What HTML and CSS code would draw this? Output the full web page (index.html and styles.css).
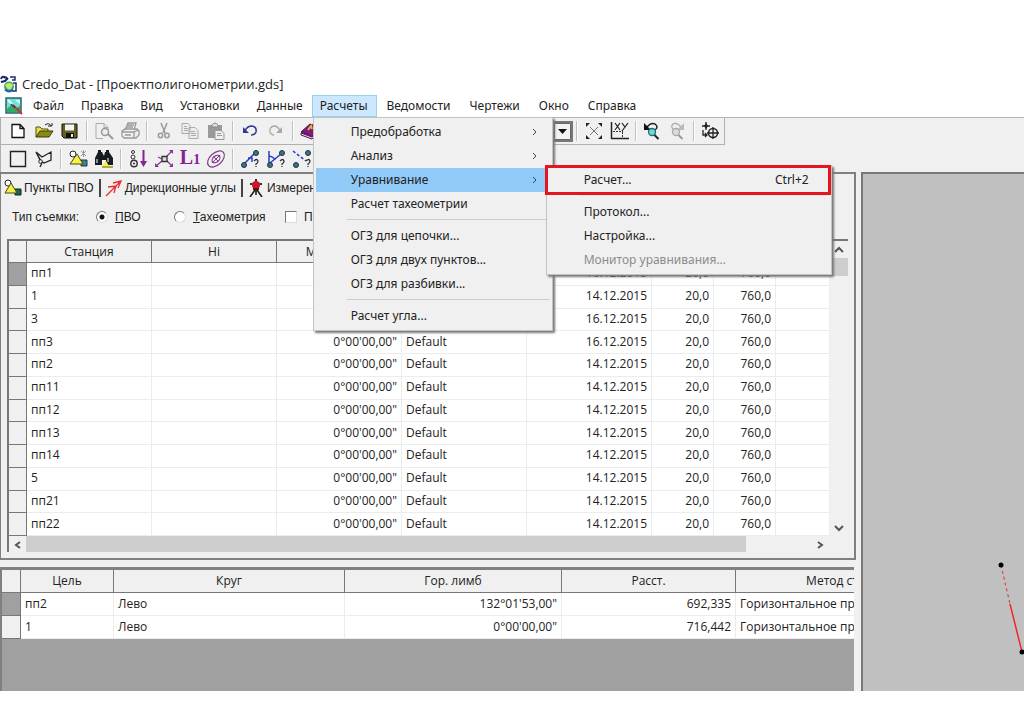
FILE: index.html
```html
<!DOCTYPE html>
<html lang="ru">
<head>
<meta charset="utf-8">
<title>Credo_Dat</title>
<link rel="stylesheet" href="styles.css">
</head>
<body>
<div class="window">
  <header class="titlebar">
    <svg class="app-icon" width="18" height="18" viewBox="0 0 18 18"><path d="M1 4q1-3 3-2t3 0M1 7l4-1 3-3" fill="none" stroke="#17206e" stroke-width="2"/><path d="M10 2h5v3h-3M13 8h3v8h-4" fill="none" stroke="#222a70" stroke-width="1.500"/><circle cx="9" cy="11.500" r="5" fill="#35ad6a"/><path d="M5 10q4-4 8 0l-2 4q-3 2-6-4" fill="#c9e86b"/><path d="M5 14.500q4 4 8 0" stroke="#1d62b8" stroke-width="2" fill="none"/></svg>
    <h1 class="title">Credo_Dat - [Проектполигонометрии.gds]</h1>
  </header>

  <nav class="menubar">
    <svg class="doc-icon" width="18" height="18" viewBox="0 0 18 18"><rect x="1" y="1" width="15" height="15" fill="#6fe0dd" stroke="#2d6468" stroke-width="1.500"/><path d="M2 12l4-4 4 4 5-3v6H2z" fill="#31a968"/><path d="M10 3l5 4V3z" fill="#d6fbfa"/><path d="M3 3l5 5" stroke="#e8fff6" stroke-width="2"/><path d="M8 8l9 9" stroke="#c8303a" stroke-width="1.800"/><path d="M6 7l4 4" stroke="#333" stroke-width="1.500"/></svg>
    <button class="menu-button">Файл</button>
    <button class="menu-button">Правка</button>
    <button class="menu-button">Вид</button>
    <button class="menu-button">Установки</button>
    <button class="menu-button">Данные</button>
    <div class="menu-holder">
      <button class="menu-button menu-button-open">Расчеты</button>
      <div class="menu main-menu">
        <button class="menu-item">Предобработка<svg class="chevron" width="6" height="8" viewBox="0 0 6 8"><path d="M1 1l3 3-3 3"/></svg></button>
        <button class="menu-item">Анализ<svg class="chevron" width="6" height="8" viewBox="0 0 6 8"><path d="M1 1l3 3-3 3"/></svg></button>
        <button class="menu-item menu-item-active">Уравнивание<svg class="chevron" width="6" height="8" viewBox="0 0 6 8"><path d="M1 1l3 3-3 3"/></svg></button>
        <button class="menu-item">Расчет тахеометрии</button>
        <hr class="menu-line">
        <button class="menu-item">ОГЗ для цепочки...</button>
        <button class="menu-item">ОГЗ для двух пунктов...</button>
        <button class="menu-item">ОГЗ для разбивки...</button>
        <hr class="menu-line">
        <button class="menu-item">Расчет угла...</button>
      </div>
      <div class="menu sub-menu">
        <button class="menu-item">Расчет...<span class="shortcut">Ctrl+2</span></button>
        <hr class="menu-line menu-line-faint">
        <button class="menu-item">Протокол...</button>
        <button class="menu-item">Настройка...</button>
        <button class="menu-item" disabled>Монитор уравнивания...</button>
        <div class="highlight-frame"></div>
      </div>
    </div>
    <button class="menu-button">Ведомости</button>
    <button class="menu-button">Чертежи</button>
    <button class="menu-button">Окно</button>
    <button class="menu-button">Справка</button>
  </nav>

  <div class="toolbar toolbar-main">
    <button class="tool" aria-label="Создать"><svg viewBox="0 0 20 20"><path d="M4 3.500h8l4 4v9H4zM12 3.500v4h4" fill="#fff" stroke="#111" stroke-width="1.300"/></svg></button>
    <button class="tool" aria-label="Открыть"><svg viewBox="0 0 20 20"><path d="M2 16V6h4l2 2h6v2" fill="#e3dc4c" stroke="#55530c"/><path d="M2 16l4-6h13l-4 6z" fill="#8b8a16" stroke="#3a390a"/><path d="M11 4q4-3 6 1m-3 0h4V2" fill="none" stroke="#222"/></svg></button>
    <button class="tool" aria-label="Сохранить"><svg viewBox="0 0 20 20"><path d="M2 3h15v14H4l-2-2z" fill="#62621a" stroke="#111"/><path d="M5 3.500h9v6H5z" fill="#f4f4f4"/><path d="M6 12h8v5H6z" fill="#111"/><path d="M11 13h2v3h-2z" fill="#eee"/></svg></button>
    <span class="tool-line"></span>
    <button class="tool" aria-label="Просмотр"><svg viewBox="0 0 20 20"><path d="M9 17.500H2v-15h8l4 4v3M10 2.500v4h4" fill="none" stroke="#aaa"/><circle cx="11" cy="11" r="3.500" fill="#eee" stroke="#999" stroke-width="1.500"/><path d="M14 13l5 5" stroke="#999" stroke-width="2"/></svg></button>
    <button class="tool" aria-label="Печать"><svg viewBox="0 0 20 20"><path d="M5 9l3-7h8l-2 7M2 10l3-2h12l2 2v4l-3 3H4l-2-2zM2 11h12l4-2M14 11v6M8 4h6M7 6h6M5 14h6" fill="none" stroke="#999" stroke-width="1.300"/></svg></button>
    <span class="tool-line"></span>
    <button class="tool" aria-label="Вырезать"><svg viewBox="0 0 20 20"><path d="M7 2l4 10M13 2L9 12" stroke="#999" stroke-width="1.500"/><circle cx="6.500" cy="14.500" r="2.200" fill="none" stroke="#999" stroke-width="1.500"/><circle cx="13" cy="14.500" r="2.200" fill="none" stroke="#999" stroke-width="1.500"/></svg></button>
    <button class="tool" aria-label="Копировать"><svg viewBox="0 0 20 20"><path d="M2 2.500h6l2 2v8H2zM9 6.500h6l3 3v8H9zM4 5.500h3M4 7.500h4M4 9.500h4M11 10.500h4M11 12.500h5M11 14.500h5" fill="#eee" stroke="#aaa"/></svg></button>
    <button class="tool" aria-label="Вставить"><svg viewBox="0 0 20 20"><path d="M2 4h14v13H2z" fill="#999"/><path d="M6 4q3-4 6 0v2H6z" fill="#ddd" stroke="#888"/><path d="M9 9.500h6l3 3v6H9zM11 12.500h4M11 14.500h5" fill="#eee" stroke="#999"/></svg></button>
    <span class="tool-line"></span>
    <button class="tool" aria-label="Отменить"><svg viewBox="0 0 20 20"><path d="M5 10q2-5 7-5 5 1 4 6-1 3-5 3" fill="none" stroke="#303a91" stroke-width="1.500"/><path d="M3 6v6h6z" fill="#303a91"/></svg></button>
    <button class="tool" aria-label="Вернуть"><svg viewBox="0 0 20 20"><path d="M14 10q-2-5-6-5-5 1-4 6 1 3 4 3" fill="none" stroke="#aaa" stroke-width="1.300"/><path d="M16 6v6h-6z" fill="#aaa"/></svg></button>
    <span class="tool-line"></span>
    <button class="tool" aria-label="Справочник"><svg viewBox="0 0 20 20"><path d="M1 11l9-8 9 3-7 10z" fill="#81177f" stroke="#420c46"/><path d="M1 12l11 4 7-10v3l-7 9L1 14z" fill="#eadcf0" stroke="#551357"/><path d="M8 9l3-4 1 3" stroke="#e0b72d" fill="none" stroke-width="2"/></svg></button>
    <div class="scale-box"><select aria-label="Масштаб"><option></option></select><svg class="scale-arrow" width="17" height="17" viewBox="0 0 17 17"><path d="M.5.5h16v16H.5z" fill="#f3f3f3" stroke="#666"/><path d="M4 6h9l-4.500 5z" fill="#111"/></svg></div>
    <span class="tool-line"></span>
    <button class="tool" aria-label="Показать все"><svg viewBox="0 0 20 20"><path d="M6 6l8 8M14 6l-8 8" stroke="#777"/><path d="M2 6V2h4zM14 2h4v4zM18 14v4h-4zM6 18H2v-4z" fill="#222"/></svg></button>
    <button class="tool" aria-label="Координаты"><svg viewBox="0 0 20 20"><path d="M1.500 1v17M1 17.500h18" stroke="#222" stroke-width="1.500"/><path d="M5 2l5 7M10 2L5 9M12 2l3 4 3-4M15 6l-3 4" fill="none" stroke="#222" stroke-width="1.200"/><path d="M3 10.500h10M12.500 11v6" stroke="#333" stroke-dasharray="2 1"/></svg></button>
    <span class="tool-line tool-line-narrow"></span>
    <button class="tool" aria-label="Предыдущий вид"><svg viewBox="0 0 20 20"><path d="M5 6q4-5 8-3 4 3 0 6" fill="none" stroke="#222" stroke-width="1.500"/><path d="M2 2v7h7z" fill="#111"/><circle cx="10" cy="11" r="3.500" fill="#63dddf" stroke="#246b74" stroke-width="1.300"/><path d="M12.500 14l4 4" stroke="#222" stroke-width="2"/></svg></button>
    <button class="tool" aria-label="Следующий вид"><svg viewBox="0 0 20 20"><path d="M13 6Q9 1 5 3 2 6 6 9" fill="none" stroke="#aaa" stroke-width="1.300"/><path d="M16 2v7H9z" fill="#bbb"/><circle cx="8" cy="11" r="3.500" fill="#ddd" stroke="#aaa" stroke-width="1.300"/><path d="M10.500 14l4 4" stroke="#999" stroke-width="2"/></svg></button>
    <span class="tool-line tool-line-narrow"></span>
    <button class="tool tool-end" aria-label="Центрировать"><svg viewBox="0 0 20 20"><circle cx="13" cy="12" r="4.500" fill="none" stroke="#222" stroke-width="1.500"/><path d="M7 12h12M13 6v12M6 1v8M2 5h8M3 9v5h4M5 12l2 2-2 2" fill="none" stroke="#222" stroke-width="1.300"/><path d="M6 2l2 3-2 3-2-3z" fill="#222"/></svg></button>
  </div>

  <div class="toolbar">
    <button class="tool" aria-label="Прямоугольник"><svg viewBox="0 0 20 20"><path d="M2.500 2.500h15v15h-15z" fill="none" stroke="#222" stroke-width="1.400"/></svg></button>
    <button class="tool" aria-label="Контур"><svg viewBox="0 0 20 20"><path d="M2 3l6 5 9-5v8l-7 3-3-2zM2 3l4 8M8 14l-2 4" fill="none" stroke="#222" stroke-width="1.300"/><circle cx="6.500" cy="12.500" r="1.800" fill="#eee" stroke="#222"/></svg></button>
    <span class="tool-line"></span>
    <button class="tool" aria-label="Пункты"><svg viewBox="0 0 20 20"><circle cx="5" cy="5" r="3" fill="#fff" stroke="#222"/><path d="M13 11h6v6h-6z" fill="#3b8190" stroke="#234"/><path d="M2 15L9 5l6 10z" fill="#f6f04b" stroke="#4b4912"/><path d="M13 2l5 5M18 2l-5 5M15.500 1v7" stroke="#999"/></svg></button>
    <button class="tool" aria-label="Найти"><svg viewBox="0 0 20 20"><path d="M1 16V9l3-6h4l2 4 1-4h4l4 6v7h-7v-5H8v5zM4 1h3v3H4zM12 1h3v3h-3z" fill="#181c21"/><path d="M3 10v4M14 9v4" stroke="#fff"/><path d="M8 17l4-5 3 5z" fill="#f6ef50"/><path d="M8 18h11" stroke="#b0aa37" stroke-width="2"/></svg></button>
    <span class="tool-line"></span>
    <button class="tool" aria-label="Высоты"><svg viewBox="0 0 20 20"><circle cx="5" cy="3" r="1.500" fill="none" stroke="#333"/><circle cx="5" cy="8" r="2" fill="none" stroke="#333"/><circle cx="6" cy="14.500" r="3.200" fill="none" stroke="#333" stroke-width="1.400"/><circle cx="6" cy="14.500" r="1" fill="#333"/><path d="M15.500 1v14" stroke="#842391" stroke-width="2"/><path d="M12 12h7l-3.500 6z" fill="#842391"/></svg></button>
    <button class="tool" aria-label="Сеть"><svg viewBox="0 0 20 20"><path d="M2 17l6-5M12 8l6-6M12 11l6 6M8 10L4 8" stroke="#8b3295" stroke-width="1.300"/><path d="M19 1v4l-4-4zM1 18v-4l4 4zM19 18h-4l4-4z" fill="#8b3295"/><path d="M8 7.500h5v5H8z" fill="#ddd" stroke="#333" stroke-width="1.300"/></svg></button>
    <button class="tool" aria-label="L1"><span class="glyph-l">L<small>1</small></span></button>
    <button class="tool" aria-label="Эллипсы"><svg viewBox="0 0 20 20"><g transform="rotate(-42 10 10)" fill="none" stroke="#813c90" stroke-width="1.200"><ellipse cx="10" cy="10" rx="10" ry="6"/><ellipse cx="10" cy="10" rx="4.500" ry="3"/></g><path d="M8 8l4 4M6 14l8-8" stroke="#813c90"/></svg></button>
    <span class="tool-line"></span>
    <button class="tool" aria-label="Обратная задача"><svg viewBox="0 0 20 20"><path d="M5 14l9-9M8 9h4v4" fill="none" stroke="#293aca" stroke-width="1.500"/><circle cx="4" cy="16" r="2.500" fill="#38777c" stroke="#234"/><circle cx="16" cy="4" r="2.500" fill="#38777c" stroke="#234"/><path d="M14 12q3-3 4 0 0 2-2 3v1m0 1v1" fill="none" stroke="#333" stroke-width="1.300"/></svg></button>
    <button class="tool" aria-label="Угол"><svg viewBox="0 0 20 20"><path d="M3 15V2M4 14L15 5M3 7q5 1 6 4" fill="none" stroke="#293aca" stroke-width="1.500"/><circle cx="4" cy="16" r="2.500" fill="#38777c" stroke="#234"/><circle cx="16" cy="4" r="2.500" fill="#38777c" stroke="#234"/><path d="M14 12q3-3 4 0 0 2-2 3v1m0 1v1" fill="none" stroke="#333" stroke-width="1.300"/></svg></button>
    <button class="tool" aria-label="Створ"><svg viewBox="0 0 20 20"><path d="M1 2l13 10" stroke="#293aca" stroke-width="1.500" stroke-dasharray="3 2"/><circle cx="4" cy="16" r="2.500" fill="#38777c" stroke="#234"/><circle cx="16" cy="4" r="2.500" fill="#38777c" stroke="#234"/><path d="M14 12q3-3 4 0 0 2-2 3v1m0 1v1" fill="none" stroke="#333" stroke-width="1.300"/></svg></button>
  </div>

  <main class="workspace">
    <div class="left">
      <section class="stations">
        <div class="tabs">
          <button class="tab"><svg width="18" height="18" viewBox="0 0 18 18"><circle cx="4" cy="4" r="3" fill="#fff" stroke="#222"/><path d="M11 10h6v6h-6z" fill="#176d36" stroke="#123"/><path d="M1 14L7 4l6 10z" fill="#f6ee45" stroke="#4b4912"/></svg>Пункты ПВО</button>
          <button class="tab"><svg width="18" height="18" viewBox="0 0 18 18"><path d="M1 17L16 2M8 4l8-2-3 7M3 8l8-1-2 7" fill="none" stroke="#ed2b2b" stroke-width="1.300"/></svg>Дирекционные углы</button>
          <button class="tab tab-last"><svg width="18" height="18" viewBox="0 0 18 18"><path d="M9 0v3M3 5h12" stroke="#333" stroke-width="2"/><circle cx="9" cy="6" r="4" fill="#c9182a"/><path d="M6 9h6v2H6z" fill="#611"/><path d="M8 11l-5 7M10 11l5 7M9 11v5" stroke="#282020" stroke-width="1.600"/></svg>Измерения</button>
        </div>
        <div class="filters">
          <span class="filter-title">Тип съемки:</span>
          <label class="choice choice-first"><input type="radio" name="survey" checked><span><u>П</u>ВО</span></label>
          <label class="choice choice-second"><input type="radio" name="survey"><span><u>Т</u>ахеометрия</span></label>
          <label class="choice"><input type="checkbox"><span>П</span></label>
        </div>
        <div class="grid-box">
          <div class="grid-main">
            <table class="grid station-grid">
              <colgroup><col class="c-mark"><col class="c-wide"><col class="c-wide"><col class="c-wide"><col class="c-wide"><col class="c-wide"><col class="c-num"><col class="c-num"><col></colgroup>
              <thead><tr><th></th><th>Станция</th><th>Hi</th><th>Место нуля</th><th></th><th></th><th></th><th></th><th></th></tr></thead>
              <tbody>
                <tr class="current"><th></th><td>пп1</td><td></td><td></td><td></td><td class="num">16.12.2015</td><td class="num">20,0</td><td class="num">760,0</td><td></td></tr>
                <tr><th></th><td>1</td><td></td><td></td><td></td><td class="num">14.12.2015</td><td class="num">20,0</td><td class="num">760,0</td><td></td></tr>
                <tr><th></th><td>3</td><td></td><td></td><td></td><td class="num">16.12.2015</td><td class="num">20,0</td><td class="num">760,0</td><td></td></tr>
                <tr><th></th><td>пп3</td><td></td><td class="num">0°00'00,00"</td><td>Default</td><td class="num">16.12.2015</td><td class="num">20,0</td><td class="num">760,0</td><td></td></tr>
                <tr><th></th><td>пп2</td><td></td><td class="num">0°00'00,00"</td><td>Default</td><td class="num">14.12.2015</td><td class="num">20,0</td><td class="num">760,0</td><td></td></tr>
                <tr><th></th><td>пп11</td><td></td><td class="num">0°00'00,00"</td><td>Default</td><td class="num">14.12.2015</td><td class="num">20,0</td><td class="num">760,0</td><td></td></tr>
                <tr><th></th><td>пп12</td><td></td><td class="num">0°00'00,00"</td><td>Default</td><td class="num">14.12.2015</td><td class="num">20,0</td><td class="num">760,0</td><td></td></tr>
                <tr><th></th><td>пп13</td><td></td><td class="num">0°00'00,00"</td><td>Default</td><td class="num">14.12.2015</td><td class="num">20,0</td><td class="num">760,0</td><td></td></tr>
                <tr><th></th><td>пп14</td><td></td><td class="num">0°00'00,00"</td><td>Default</td><td class="num">14.12.2015</td><td class="num">20,0</td><td class="num">760,0</td><td></td></tr>
                <tr><th></th><td>5</td><td></td><td class="num">0°00'00,00"</td><td>Default</td><td class="num">14.12.2015</td><td class="num">20,0</td><td class="num">760,0</td><td></td></tr>
                <tr><th></th><td>пп21</td><td></td><td class="num">0°00'00,00"</td><td>Default</td><td class="num">14.12.2015</td><td class="num">20,0</td><td class="num">760,0</td><td></td></tr>
                <tr><th></th><td>пп22</td><td></td><td class="num">0°00'00,00"</td><td>Default</td><td class="num">14.12.2015</td><td class="num">20,0</td><td class="num">760,0</td><td></td></tr>
              </tbody>
            </table>
            <div class="v-scroll">
              <button class="scroll-button" aria-label="Вверх"><svg width="10" height="8" viewBox="0 0 10 8"><path d="M1 6l4-4 4 4"/></svg></button>
              <div class="v-thumb"></div>
              <button class="scroll-button scroll-down" aria-label="Вниз"><svg width="10" height="8" viewBox="0 0 10 8"><path d="M1 2l4 4 4-4"/></svg></button>
            </div>
          </div>
          <div class="h-scroll">
            <button class="scroll-button" aria-label="Влево"><svg width="8" height="10" viewBox="0 0 8 10"><path d="M6 2L2 5l4 3"/></svg></button>
            <div class="h-thumb"></div>
            <button class="scroll-button scroll-right" aria-label="Вправо"><svg width="8" height="10" viewBox="0 0 8 10"><path d="M2 2l4 3-4 3"/></svg></button>
          </div>
        </div>
      </section>
      <section class="targets">
        <table class="grid target-grid">
          <colgroup><col class="t-mark"><col class="t-goal"><col class="t-circle"><col class="t-limb"><col class="t-dist"><col class="t-method"></colgroup>
          <thead><tr><th></th><th>Цель</th><th>Круг</th><th>Гор. лимб</th><th>Расст.</th><th>Метод съемки</th></tr></thead>
          <tbody>
            <tr class="current"><th></th><td>пп2</td><td>Лево</td><td class="num">132°01'53,00"</td><td class="num">692,335</td><td>Горизонтальное проложение</td></tr>
            <tr><th></th><td>1</td><td>Лево</td><td class="num">0°00'00,00"</td><td class="num">716,442</td><td>Горизонтальное проложение</td></tr>
          </tbody>
        </table>
      </section>
    </div>
    <section class="plan">
      <svg class="plan-drawing" viewBox="0 0 161 517" preserveAspectRatio="xMinYMin meet"><path d="M138 391l9 39" stroke="#dd4444" stroke-width="1.200" stroke-dasharray="3 3"/><path d="M147 430l12 48" stroke="#ee2222" stroke-width="1.400"/><circle cx="138" cy="391" r="2.500"/><circle cx="159" cy="478" r="2.500"/></svg>
    </section>
  </main>
</div>
</body>
</html>
```
FILE: styles.css
```css
* { box-sizing: border-box; }

body {
  margin: 0;
  padding-top: 72px;
  background: #fff;
  color: #222;
  font: 12px/16px "Open Sans", "Noto Sans", sans-serif;
  overflow: hidden;
}

button, input, select { margin: 0; font: inherit; color: inherit; }
button { padding: 0; border: 0; background: none; text-align: left; white-space: nowrap; }

.window {
  display: flex;
  flex-direction: column;
  height: calc(100vh - 102px);
  background: linear-gradient(#fff 46px, #f0f0f0 46px);
}

.titlebar { display: flex; align-items: center; gap: 4px; height: 23px; }
.title { margin: 0; font-size: 13px; font-weight: 400; }

.menubar {
  display: flex;
  flex: none;
  gap: 1px;
  height: 23px;
  padding-left: 5px;
  border-bottom: 1px solid #b4b4b4;
  font-family: "Noto Sans", "Open Sans", sans-serif;
}
.doc-icon { align-self: center; margin-right: 1px; }
.menu-button { height: 22px; padding: 0 8px; }
.menu-holder ~ .menu-button { padding: 0 9px; }
.menu-button-open { background: #cce8ff; border: 1px solid #99cfef; padding: 0 8px 0 7px; }
.menu-holder { position: relative; }

.menu {
  position: absolute;
  padding: 2px;
  background: #f0f0f0;
  border: 1px solid #c4c4c4;
  box-shadow: 2px 2px 2px #777;
}
.main-menu { top: 22px; left: 1px; width: 240px; z-index: 2; }
.sub-menu { top: 70px; left: 234px; width: 286px; z-index: 3; }
.menu-item {
  display: flex;
  align-items: center;
  justify-content: space-between;
  width: 100%;
  height: 24px;
  padding: 0 12px 0 35px;
}
.menu-item:disabled { color: #8c8c8c; }
.menu-item-active { background: #91c9f7; }
.menu-line { margin: 3px 0 4px 31px; border: 0; border-top: 1px solid #ccc; }
.menu-line-faint { border-color: #e4e4e4; }
.chevron { fill: none; stroke: #444; stroke-width: 1; }
.shortcut { padding-right: 8px; }
.highlight-frame {
  position: absolute;
  top: -1px;
  left: -2px;
  right: 0;
  height: 30px;
  border: 3px solid #e6141c;
}

.toolbar {
  display: flex;
  flex: none;
  align-items: center;
  height: 27px;
  padding-left: 4px;
  background: #f0f0f0;
  border-left: 1px solid #b0b0b0;
}
.toolbar-main { width: 725px; border-right: 1px solid #b0b0b0; border-bottom: 1px solid #b0b0b0; }
.tool { display: flex; flex: none; align-items: center; justify-content: center; width: 26px; height: 24px; }
.tool svg { width: 20px; height: 20px; fill: none; }
.tool-end { margin-right: 1px; }
.tool-line { flex: none; width: 2px; height: 20px; margin: 0 3px; background: #c0c0c0; border-right: 1px solid #fff; }
.tool-line-narrow { margin: 0 2px; }
.glyph-l { color: #842391; font: 700 20px/20px "Liberation Serif", serif; }
.glyph-l small { font-size: 14px; }
.scale-box { position: relative; flex: 1; height: 21px; }
.scale-box select { width: 100%; height: 21px; appearance: none; background: #fff; border: 2px solid #777; border-radius: 0; }
.scale-arrow { position: absolute; top: 2px; right: 2px; }

.workspace { display: flex; flex: 1; min-height: 0; }
.left { display: flex; flex-direction: column; width: 856px; flex: none; }
.stations {
  display: flex;
  flex-direction: column;
  height: 388px;
  flex: none;
  padding: 1px 6px 0 0;
  border: 2px solid #808080;
  border-width: 2px 2px 2px 1px;
}
.tabs, .filters { display: flex; align-items: center; font-family: "Liberation Sans", sans-serif; }
.tabs { height: 25px; padding-left: 3px; }
.tab { display: flex; align-items: center; gap: 2px; padding-right: 5px; margin-right: 4px; border-right: 2px solid #444; }
.tab-last { border: 0; }
.filters { height: 34px; padding: 0 0 0 11px; }
.filter-title { width: 84px; }
.choice { display: flex; align-items: center; gap: 7px; }
.choice-first { width: 78px; }
.choice-second { width: 111px; }
.choice input {
  appearance: none;
  width: 12px;
  height: 12px;
  background: #fff;
  border: 1px solid #777;
  border-right-color: #ddd;
  border-bottom-color: #ddd;
}
.choice input[type="radio"] { border-radius: 50%; }
.choice input[type="radio"]:checked { background: radial-gradient(#111 2px, #fff 3px); }

.grid-box { margin: 5px 0 0 6px; border-top: 2px solid #777; border-left: 2px solid #777; }
.grid-main { display: flex; background: #fff; }
.grid { border-collapse: separate; border-spacing: 0; table-layout: fixed; background: #fff; white-space: nowrap; }
.grid th, .grid td { padding: 0 4px; overflow: hidden; font-weight: 400; }
.grid td { padding-bottom: 1px; border-right: 1px solid #ececec; border-bottom: 1px solid #ececec; }
.grid th { background: #f0f0f0; border-right: 1px solid #777; border-bottom: 1px solid #777; }
.grid .num { text-align: right; }
.grid .current th { background: #a0a0a0; }
.station-grid { flex: 1; width: 0; height: 295px; }
.station-grid thead { height: 22px; }
.c-mark { width: 18px; }
.c-wide { width: 125px; }
.c-num { width: 62px; }
.v-scroll { display: flex; flex-direction: column; width: 18px; background: #f0f0f0; }
.scroll-button { display: flex; align-items: center; justify-content: center; width: 17px; height: 17px; }
.scroll-button svg { fill: none; stroke: #555; stroke-width: 2; }
.v-thumb { height: 18px; background: #cdcdcd; }
.scroll-down { margin-top: auto; }
.h-scroll { display: flex; height: 16px; padding-right: 20px; background: #f0f0f0; }
.h-thumb { width: 720px; background: #cdcdcd; }
.scroll-right { margin-left: auto; }

.targets {
  flex: 1;
  margin: 7px 2px 0 0;
  overflow: hidden;
  background: #a0a0a0;
  border: 0 solid #808080;
  border-top-width: 3px;
  border-left-width: 2px;
}
.target-grid { width: 959px; }
.target-grid tr { height: 23px; }
.t-mark { width: 19px; }
.t-goal { width: 93px; }
.t-circle { width: 231px; }
.t-limb { width: 217px; }
.t-dist { width: 174px; }

.plan { flex: 1; margin-left: 5px; overflow: hidden; background: #c0c0c0; border: 2px solid #777; border-width: 2px 0 0 2px; }
.plan-drawing { display: block; width: 100%; }
```
